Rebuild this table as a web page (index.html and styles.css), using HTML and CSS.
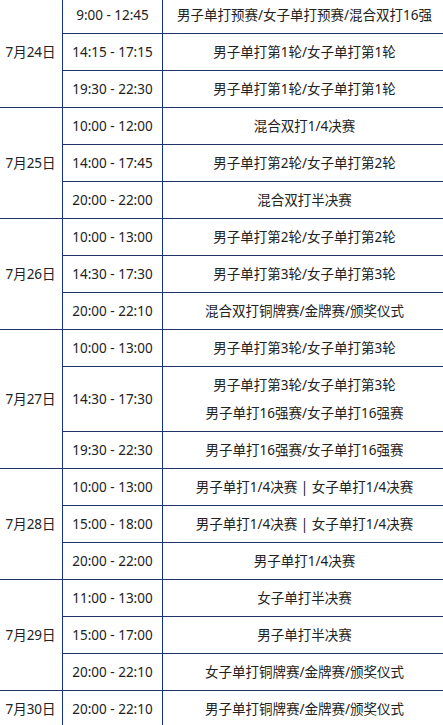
FILE: index.html
```html
<!DOCTYPE html>
<html lang="zh">
<head>
<meta charset="utf-8">
<title>赛程</title>
<link rel="stylesheet" href="styles.css">
</head>
<body>
<table class="schedule">
  <colgroup>
    <col class="c-date">
    <col class="c-time">
    <col class="c-event">
  </colgroup>
  <tbody>
    <tr><td class="date" rowspan="3">7月24日</td><td>9:00 - 12:45</td><td>男子单打预赛/女子单打预赛/混合双打16强</td></tr>
    <tr><td>14:15 - 17:15</td><td>男子单打第1轮/女子单打第1轮</td></tr>
    <tr><td>19:30 - 22:30</td><td>男子单打第1轮/女子单打第1轮</td></tr>

    <tr><td class="date" rowspan="3">7月25日</td><td>10:00 - 12:00</td><td>混合双打1/4决赛</td></tr>
    <tr><td>14:00 - 17:45</td><td>男子单打第2轮/女子单打第2轮</td></tr>
    <tr><td>20:00 - 22:00</td><td>混合双打半决赛</td></tr>

    <tr><td class="date" rowspan="3">7月26日</td><td>10:00 - 13:00</td><td>男子单打第2轮/女子单打第2轮</td></tr>
    <tr><td>14:30 - 17:30</td><td>男子单打第3轮/女子单打第3轮</td></tr>
    <tr><td>20:00 - 22:10</td><td>混合双打铜牌赛/金牌赛/颁奖仪式</td></tr>

    <tr><td class="date" rowspan="3">7月27日</td><td>10:00 - 13:00</td><td>男子单打第3轮/女子单打第3轮</td></tr>
    <tr><td>14:30 - 17:30</td><td>男子单打第3轮/女子单打第3轮<br>男子单打16强赛/女子单打16强赛</td></tr>
    <tr><td>19:30 - 22:30</td><td>男子单打16强赛/女子单打16强赛</td></tr>

    <tr><td class="date" rowspan="3">7月28日</td><td>10:00 - 13:00</td><td>男子单打1/4决赛 | 女子单打1/4决赛</td></tr>
    <tr><td>15:00 - 18:00</td><td>男子单打1/4决赛 | 女子单打1/4决赛</td></tr>
    <tr><td>20:00 - 22:00</td><td>男子单打1/4决赛</td></tr>

    <tr><td class="date" rowspan="3">7月29日</td><td>11:00 - 13:00</td><td>女子单打半决赛</td></tr>
    <tr><td>15:00 - 17:00</td><td>男子单打半决赛</td></tr>
    <tr><td>20:00 - 22:10</td><td>女子单打铜牌赛/金牌赛/颁奖仪式</td></tr>

    <tr><td class="date">7月30日</td><td>20:00 - 22:10</td><td>男子单打铜牌赛/金牌赛/颁奖仪式</td></tr>
  </tbody>
</table>
</body>
</html>
```
FILE: styles.css
```css
html, body {
  margin: 0;
  padding: 0;
  background: #ffffff;
  overflow: hidden;
}

.schedule {
  border-collapse: collapse;
  table-layout: fixed;
  width: 448px;
  margin: -4px 0 0 -2px;
  font-family: "Noto Sans", "Noto Sans CJK SC", sans-serif;
  font-size: 13.5px;
  color: #222222;
}

.c-date { width: 64px; }
.c-time { width: 100px; }
.c-event { width: 284px; }

.schedule td {
  border-top: 1px solid #1f3468;
  border-bottom: 1px solid #1f3468;
  border-left: 1px solid #132f92;
  border-right: 1px solid #132f92;
  padding: 4px 0;
  line-height: 28px;
  text-align: center;
  vertical-align: middle;
  white-space: nowrap;
}
```
